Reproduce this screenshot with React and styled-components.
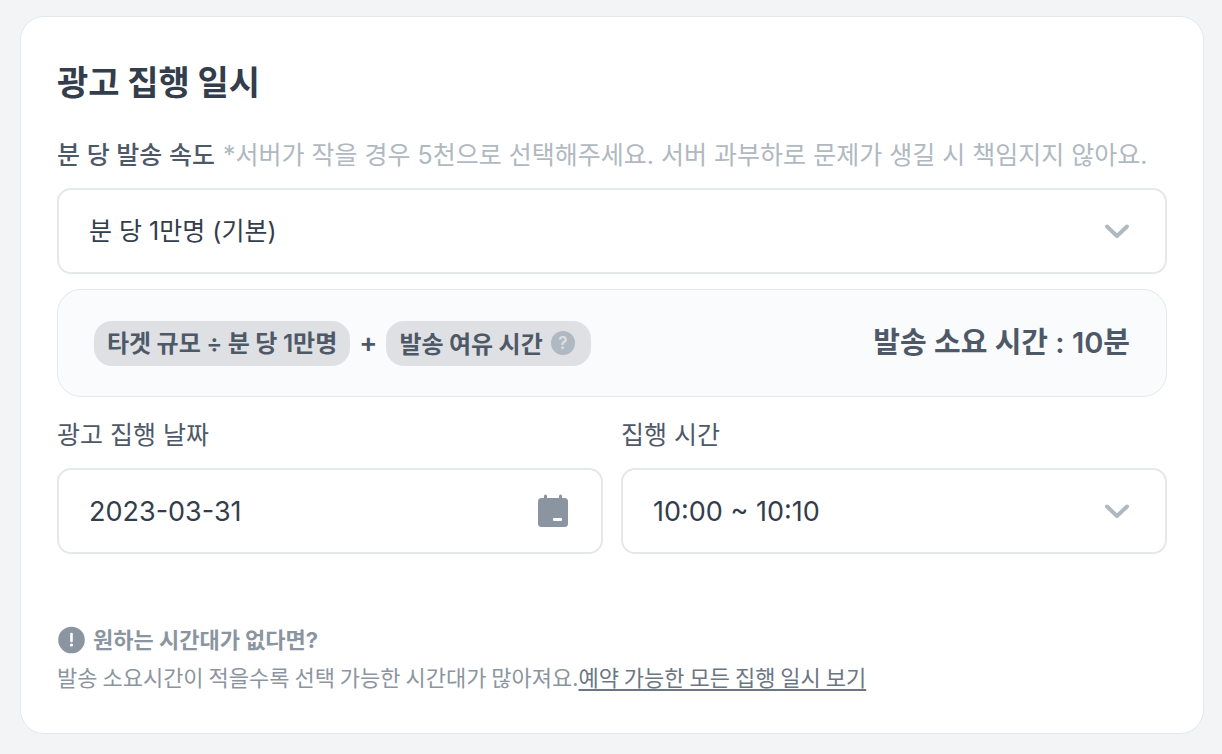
import React from "react";
import styled, { createGlobalStyle } from "styled-components";

const GlobalStyle = createGlobalStyle`
  *, *::before, *::after { box-sizing: border-box; }
  body {
    margin: 0;
    background: #f2f4f6;
    color: #333d4b;
    font-family: Inter, "Noto Sans CJK KR", sans-serif;
  }
  button, input, select { font: inherit; color: inherit; }
`;

const korean = `font-family: "Noto Sans CJK KR", Inter, sans-serif;`;

const Page = styled.main`
  padding: 16px 18px 20px 20px;
`;

const Card = styled.form`
  padding: 40px 36px 40px;
  background: #fff;
  border: 1px solid #e5e8eb;
  border-radius: 24px;
`;

const Title = styled.h1`
  margin: 0 0 33px;
  font-size: 34px;
  line-height: 48px;
  font-weight: 700;
  ${korean}
`;

const Field = styled.div`
  display: flex;
  flex-direction: column;
  gap: 16px;
  min-width: 0;
`;

const LabelRow = styled.div`
  display: flex;
  flex-wrap: wrap;
  gap: 0 8px;
  font-size: 25px;
  line-height: 34px;
`;

const Label = styled.label`
  color: #4e5968;
  font-weight: ${(p) => (p.$strong ? 500 : 400)};
`;

const Hint = styled.span`
  color: #b0b8c1;
`;

const Control = styled.div`
  display: grid;
  align-items: center;
  position: relative;
`;

const controlBox = `
  width: 100%;
  height: 86px;
  padding: 0 80px 0 30px;
  border: 2px solid #e5e8eb;
  border-radius: 14px;
  background: #fff;
  outline: none;
`;

const Select = styled.select`
  ${controlBox}
  appearance: none;
  font-size: ${(p) => (p.$numeric ? "27px" : "25px")};
`;

const DateInput = styled.input`
  ${controlBox}
  font-size: 27px;
`;

const Chevron = styled.svg`
  position: absolute;
  right: 36px;
  width: 28px;
  height: 20px;
  pointer-events: none;
`;

const CalendarButton = styled.button`
  position: absolute;
  right: 34px;
  display: flex;
  padding: 0;
  border: 0;
  background: none;
  cursor: pointer;
`;

const Summary = styled.section`
  display: flex;
  align-items: center;
  justify-content: space-between;
  min-height: 108px;
  margin: 15px 0 21px;
  padding: 0 36px;
  background: #fafbfd;
  border: 1px solid #e5e8eb;
  border-radius: 24px;
  color: #4e5968;
`;

const Formula = styled.div`
  display: flex;
  align-items: center;
  gap: 9px;
  font-size: 24px;
  font-weight: 600;
`;

const Plus = styled.span`
  font-size: 27px;
  line-height: 36px;
`;

const Chip = styled.span`
  display: flex;
  align-items: center;
  gap: 8px;
  height: 45px;
  padding: 0 13px;
  border-radius: 18px;
  background: #dfe0e4;
  line-height: 40px;
  white-space: nowrap;
  ${korean}
`;

const Digits = styled.span`
  font-family: Inter, sans-serif;
`;

const HelpButton = styled.button`
  display: grid;
  place-items: center;
  width: 24px;
  height: 24px;
  margin-right: 3px;
  padding: 0;
  border: 0;
  border-radius: 50%;
  background: #b0b8c1;
  color: #dfe0e4;
  font-family: Inter, sans-serif;
  font-size: 17px;
  font-weight: 600;
  line-height: 24px;
`;

const Total = styled.strong`
  font-size: 29px;
  font-weight: 600;
  line-height: 36px;
  white-space: nowrap;
`;

const Columns = styled.div`
  display: grid;
  grid-template-columns: 1fr 1fr;
  gap: 18px;
`;

const Note = styled.footer`
  margin-top: 67px;
  color: #8b95a1;
  font-size: 22px;
`;

const NoteTitle = styled.h2`
  display: flex;
  align-items: center;
  gap: 8px;
  margin: 0;
  font-size: 22px;
  line-height: 38px;
  font-weight: 700;
`;

const NoteText = styled.p`
  margin: 0;
  line-height: 34px;
  ${korean}
`;

const NoteLink = styled.a`
  color: #6b7684;
  text-decoration: underline;
  text-decoration-thickness: 2px;
  text-underline-offset: 3px;
`;

function ChevronIcon() {
  return (
    <Chevron viewBox="0 0 28 20" fill="none" aria-hidden="true">
      <path d="M4 5.5 14 15 24 5.5" stroke="#b0b8c1" strokeWidth="4" strokeLinecap="round" strokeLinejoin="round" />
    </Chevron>
  );
}

function CalendarIcon() {
  return (
    <svg width="32" height="34" viewBox="0 0 32 34" aria-hidden="true">
      <rect x="1" y="4" width="30" height="29" rx="3.5" fill="#8b95a1" />
      <path d="M8.5 2v4M23.5 2v4" stroke="#8b95a1" strokeWidth="3" strokeLinecap="round" />
      <rect x="16" y="24" width="9" height="3" rx="1" fill="#fff" />
    </svg>
  );
}

function AlertIcon() {
  return (
    <svg width="28" height="28" viewBox="0 0 28 28" aria-hidden="true">
      <circle cx="14.5" cy="14" r="13.3" fill="#8b95a1" />
      <path d="M14.5 8v7" stroke="#fff" strokeWidth="2.6" strokeLinecap="round" />
      <circle cx="14.5" cy="19" r="1.6" fill="#fff" />
    </svg>
  );
}

export default function App() {
  return (
    <>
      <GlobalStyle />
      <Page>
        <Card>
          <Title>광고 집행 일시</Title>
          <Field>
            <LabelRow>
              <Label htmlFor="speed" $strong>분 당 발송 속도</Label>
              <Hint>*서버가 작을 경우 5천으로 선택해주세요. 서버 과부하로 문제가 생길 시 책임지지 않아요.</Hint>
            </LabelRow>
            <Control>
              <Select id="speed">
                <option>분 당 1만명 (기본)</option>
              </Select>
              <ChevronIcon />
            </Control>
          </Field>
          <Summary>
            <Formula>
              <Chip>
                <span>
                  타겟 규모 <Digits>÷</Digits> 분 당 <Digits>1</Digits>만명
                </span>
              </Chip>
              <Plus>+</Plus>
              <Chip>
                발송 여유 시간
                <HelpButton type="button">?</HelpButton>
              </Chip>
            </Formula>
            <Total>발송 소요 시간 : 10분</Total>
          </Summary>
          <Columns>
            <Field>
              <LabelRow>
                <Label htmlFor="date">광고 집행 날짜</Label>
              </LabelRow>
              <Control>
                <DateInput id="date" type="text" defaultValue="2023-03-31" />
                <CalendarButton type="button" aria-label="날짜 선택">
                  <CalendarIcon />
                </CalendarButton>
              </Control>
            </Field>
            <Field>
              <LabelRow>
                <Label htmlFor="time">집행 시간</Label>
              </LabelRow>
              <Control>
                <Select id="time" $numeric>
                  <option>10:00 ~ 10:10</option>
                </Select>
                <ChevronIcon />
              </Control>
            </Field>
          </Columns>
          <Note>
            <NoteTitle>
              <AlertIcon />
              원하는 시간대가 없다면?
            </NoteTitle>
            <NoteText>
              발송 소요시간이 적을수록 선택 가능한 시간대가 많아져요.
              <NoteLink href="#slots">예약 가능한 모든 집행 일시 보기</NoteLink>
            </NoteText>
          </Note>
        </Card>
      </Page>
    </>
  );
}
